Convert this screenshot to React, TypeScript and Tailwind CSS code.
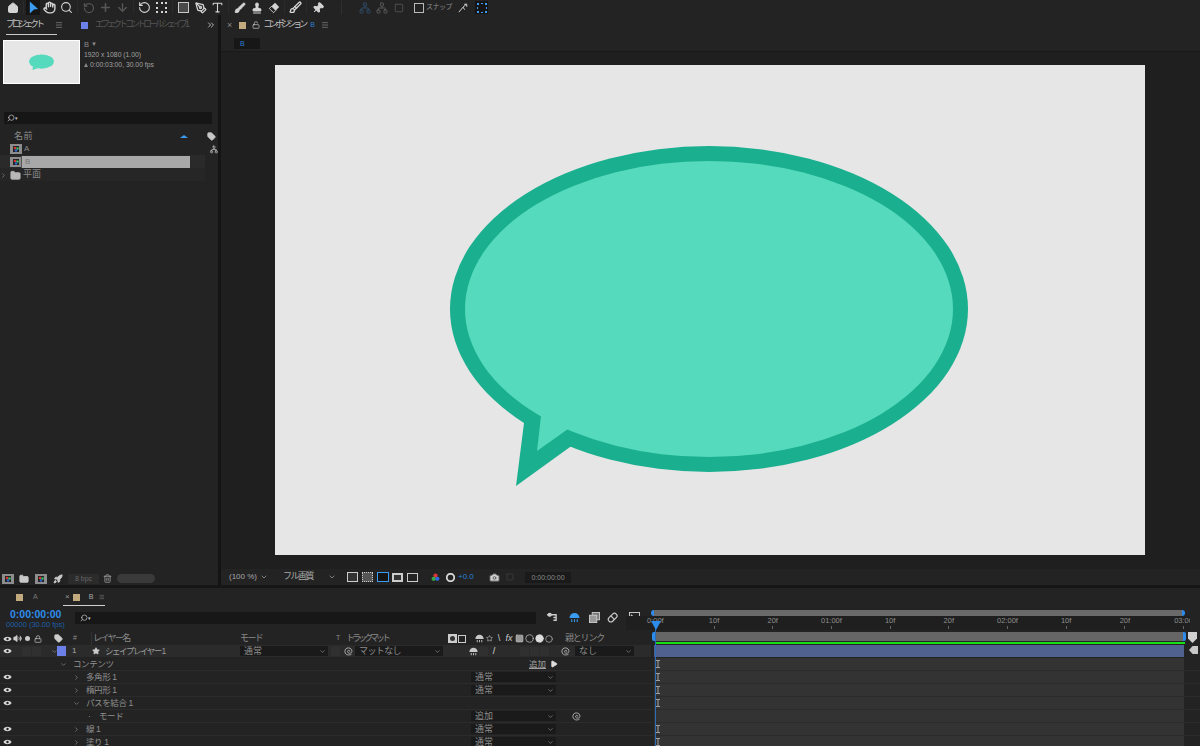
import React from 'react';
import {
  Home, Hand, Search, Plus, ArrowDown, RotateCcw, Square, PenTool, Type, Brush, Stamp, Pin,
  ChevronRight, ChevronDown, ChevronsRight, Tag, Network, Folder, Trash2, Camera, Star, Lock, Volume2, Circle, Menu, Play, Unlock, Rocket,
} from 'lucide-react';

const Arrow = () => (
  <svg viewBox="0 0 12 14" className="w-[11px] h-[14px]"><path d="M2 0 L11 8 L6.5 8.5 L2 13 Z" fill="#3a9bf0" /></svg>
);
const Eye = () => (
  <svg viewBox="0 0 12 8" className="w-[9px] h-[6px] shrink-0"><path d="M0.5 4 C3 0 9 0 11.5 4 C9 8 3 8 0.5 4 Z" fill="#d8d8d8" /><circle cx="6" cy="4" r="1.6" fill="#222" /></svg>
);
const Spiral = ({ c = '#b5b5b5' }: { c?: string }) => (
  <svg viewBox="0 0 12 12" className="w-[9px] h-[9px]" fill="none" stroke={c} strokeWidth="1.2"><path d="M10 9.5 C7 11.5 2 11 1.2 6.5 C0.8 3 3.5 1 6 1.2 C9 1.4 10.8 3.5 10.5 6 C10.2 8 7.8 8.8 6 8 C4.5 7.3 4.3 5.3 5.6 4.6 C6.8 4 8 5 7.6 6.2" /></svg>
);
const Umbrella = ({ c = '#c8c8c8', s = 'w-[9px] h-[9px]' }: { c?: string; s?: string }) => (
  <svg viewBox="0 0 12 12" className={`${s} shrink-0`}><path d="M0.5 6.5 A5.5 5.5 0 0 1 11.5 6.5 Z" fill={c} /><path d="M3 8 V11 M6 8 V11 M9 8 V11" stroke={c} strokeWidth="1.2" /></svg>
);
const Chip = ({ c }: { c: string }) => <div className="w-[7px] h-[7px]" style={{ background: c }} />;
const CompIcon = () => (
  <svg viewBox="0 0 12 10" className="w-[12px] h-[10px] shrink-0"><rect width="12" height="10" fill="#8d8d8d" /><rect x="3" y="2" width="6" height="6" fill="#222" /><circle cx="5" cy="4" r="1.3" fill="#d33" /><circle cx="7.5" cy="4.5" r="1.3" fill="#3b6" /><circle cx="6" cy="6.5" r="1.3" fill="#36c" /></svg>
);
const IBeam = () => (
  <svg viewBox="0 0 5 10" className="w-[4px] h-[10px] ml-[2px]"><path d="M0 0.5H5M0 9.5H5M2.5 0.5V9.5" stroke="#a0a0a0" strokeWidth="1.3" /></svg>
);

const Tb = ({ w = 'w-[17px]', children }: { w?: string; children?: React.ReactNode }) => (
  <div className={`${w} h-[15px] flex items-center justify-center shrink-0`}>{children}</div>
);
const Sep = () => <div className="w-[5px] h-[13px] shrink-0 flex justify-center"><div className="w-px h-full bg-[#2b2b2b]" /></div>;

function Toolbar() {
  const on = 'text-[#d4d4d4]';
  const dim = 'text-[#565656]';
  return (
    <div className="h-[15px] flex items-center bg-[#232323] pl-[4px] shrink-0">
      <Tb><Home size={12} className={on} fill="#d4d4d4" /></Tb>
      <Sep />
      <div className="w-[14px] h-[15px] bg-[#151515] flex items-center justify-center mr-[1px] shrink-0"><Arrow /></div>
      <Tb><Hand size={13} className={on} strokeWidth={2.6} /></Tb>
      <Tb><Search size={13} className={on} /></Tb>
      <Sep />
      <Tb><RotateCcw size={12} className={dim} strokeWidth={2.5} /></Tb>
      <Tb><Plus size={13} className={dim} strokeWidth={3} /></Tb>
      <Tb><ArrowDown size={13} className={dim} strokeWidth={2.5} /></Tb>
      <Sep />
      <Tb><RotateCcw size={13} className={on} /></Tb>
      <Tb><div className="w-[11px] h-[11px] border-2 border-dotted border-[#d4d4d4]" /></Tb>
      <Sep />
      <Tb><div className="w-[11px] h-[11px] border border-[#c8c8c8] bg-[#4a4a4a]" /></Tb>
      <Tb><PenTool size={12} className={on} strokeWidth={2.6} /></Tb>
      <Tb><Type size={13} className={on} /></Tb>
      <Sep />
      <Tb><Brush size={12} className={on} fill="#d4d4d4" /></Tb>
      <Tb><Stamp size={12} className={on} fill="#d4d4d4" /></Tb>
      <Tb>
        <svg viewBox="0 0 12 12" className="w-[12px] h-[12px]"><path d="M7 0.8 L11.2 5 L5.5 10.7 L1.3 6.5 Z" fill="#d4d4d4" /><path d="M1.3 6.5 L3.6 4.2 L7.8 8.4 L5.5 10.7 Z" fill="#232323" stroke="#d4d4d4" strokeWidth="0.8" /></svg>
      </Tb>
      <Sep />
      <Tb><Brush size={13} className={on} strokeWidth={2.4} /></Tb>
      <Sep />
      <Tb><Pin size={12} className={`${on} rotate-45`} fill="#d4d4d4" /></Tb>
      <div className="w-[30px] h-[13px] shrink-0 flex justify-center"><div className="w-px h-full bg-[#2f2f2f]" /></div>
      <Tb><Network size={12} className="text-[#2f4a66]" /></Tb>
      <Tb><Network size={12} className={dim} /></Tb>
      <Tb><Square size={10} className={dim} /></Tb>
      <div className="w-[7px] shrink-0" />
      <div className="w-[10px] h-[10px] border border-[#b8b8b8] mr-[2px] shrink-0" />
      <span className="text-[7px] text-[#8a8a8a] tracking-[-0.5px] w-[27px] shrink-0 whitespace-nowrap">スナップ</span>
      <Tb w="w-[20px]">
        <svg viewBox="0 0 12 12" className="w-[10px] h-[10px]" fill="none" stroke="#d4d4d4" strokeWidth="1.2"><path d="M1 11 L6 5 L8 8 M6 5 L10 1.5 M7.5 1.5 H10.5 V4.5" /></svg>
      </Tb>
      <div className="w-[13px] h-[13px] bg-[#151515] flex items-center justify-center ml-[2px] shrink-0">
        <svg viewBox="0 0 10 10" className="w-[10px] h-[10px]" fill="#3a9bf0"><rect x="0" y="0" width="2" height="2" /><rect x="8" y="0" width="2" height="2" /><rect x="0" y="8" width="2" height="2" /><rect x="8" y="8" width="2" height="2" /><rect x="4" y="0" width="2" height="1" /><rect x="4" y="9" width="2" height="1" /><rect x="0" y="4" width="1" height="2" /><rect x="9" y="4" width="1" height="2" /></svg>
      </div>
    </div>
  );
}

function ProjectPanel() {
  return (
    <div className="w-[218px] shrink-0 flex flex-col bg-[#232323]">
      <div className="h-[20px] flex items-center pl-[6px] shrink-0">
        <div className="relative h-[20px] flex items-center w-[51px] shrink-0">
          <span className="text-[9px] text-[#c0c0c0] tracking-[-3px] whitespace-nowrap">プロジェクト</span>
          <Menu size={8} className="text-[#8a8a8a] ml-[13px] shrink-0" />
          <div className="absolute left-0 right-0 bottom-[0px] h-px bg-[#c8c8c8]" />
        </div>
        <div className="w-[7px] h-[7px] bg-[#6b80e8] ml-[24px] shrink-0" />
        <span className="text-[9px] text-[#555555] tracking-[-3px] ml-[7px] w-[96px] overflow-hidden whitespace-nowrap shrink-0">エフェクトコントロールシェイプ1</span>
        <ChevronsRight size={10} className="text-[#cccccc] ml-[15px]" />
      </div>
      <div className="flex pl-[3px] pt-[5px] h-[77px] shrink-0">
        <div className="w-[77px] h-[44px] bg-[#e6e6e6] border border-white flex items-center justify-center shrink-0">
          <svg viewBox="0 0 30 20" className="w-[29px] h-[19px]"><ellipse cx="15" cy="9" rx="13" ry="7.5" fill="#55dabd" /><path d="M6 14 L5.5 18 L11 16 Z" fill="#55dabd" /></svg>
        </div>
        <div className="ml-[4px] text-[6.8px] leading-[9px] text-[#a0a0a0] whitespace-nowrap">
          <div className="text-[#8a8a8a] flex items-center h-[9px] text-[7.5px]">B <span className="ml-[2px] text-[6px]">▼</span></div>
          <div className="mt-[1px]">1920 x 1080 (1.00)</div>
          <div className="mt-[1px] flex items-center">
            <div className="w-0 h-0 border-l-[2px] border-r-[2px] border-b-[4px] border-l-transparent border-r-transparent border-b-[#888] mr-[2px]" />
            0:00:03:00, 30.00 fps
          </div>
        </div>
      </div>
      <div className="h-[12px] mx-[4px] w-[208px] bg-[#161616] flex items-center pl-[3px] shrink-0">
        <Search size={8} className="text-[#cccccc] -scale-x-100" />
        <span className="text-[5px] text-[#ccc] leading-none">▾</span>
      </div>
      <div className="flex flex-col flex-1 mt-[6px]">
        <div className="h-[13px] flex items-center pl-[14px] shrink-0">
          <span className="text-[9px] text-[#8c8c8c] tracking-[0.5px] w-[166px] shrink-0">名前</span>
          <div className="w-0 h-0 border-l-[4px] border-r-[4px] border-b-[3px] border-l-transparent border-r-transparent border-b-[#3a9bf0]" />
          <Tag size={9} className="text-[#c8c8c8] ml-[19px]" fill="#c8c8c8" />
        </div>
        <div className="h-[12px] flex items-center pl-[10px] shrink-0">
          <CompIcon />
          <span className="text-[8px] text-[#8a8a8a] ml-[2px] w-[184px] shrink-0">A</span>
          <Network size={9} className="text-[#c8c8c8] ml-[2px]" />
        </div>
        <div className="h-[13px] flex items-center pl-[10px] bg-[#2a2a2a] w-[205px] shrink-0">
          <CompIcon />
          <div className="ml-[-1px] w-[169px] h-[12px] bg-[#a8a8a8] flex items-center pl-[3px] border-l border-[#555]">
            <span className="text-[8px] text-[#777]">B</span>
          </div>
        </div>
        <div className="h-[13px] flex items-center bg-[#262626] w-[205px] pt-[1px] shrink-0">
          <ChevronRight size={7} className="text-[#999] ml-[0px] mr-[3px] shrink-0" />
          <Folder size={11} className="text-[#b8b8b8] shrink-0" fill="#b8b8b8" />
          <span className="text-[9px] text-[#8a8a8a] ml-[2px]">平面</span>
        </div>
      </div>
      <div className="h-[13px] flex items-center mb-[0px] shrink-0">
        <div className="w-[15px] flex justify-center shrink-0"><CompIcon /></div>
        <Tb><Folder size={10} className="text-[#c8c8c8]" fill="#c8c8c8" /></Tb>
        <Tb><CompIcon /></Tb>
        <Tb><Rocket size={10} className="text-[#c8c8c8]" fill="#c8c8c8" /></Tb>
        <div className="w-[31px] h-[10px] bg-[#2b2b2b] text-[7px] leading-[10px] text-[#666] text-center ml-[2px] shrink-0">8 bpc</div>
        <Tb><Trash2 size={9} className="text-[#a8a8a8]" /></Tb>
        <div className="w-[38px] h-[9px] bg-[#3a3a3a] rounded-full ml-[1px]" />
      </div>
    </div>
  );
}

const VIcon = ({ children }: { children?: React.ReactNode }) => (
  <div className="w-[15px] h-[13px] flex items-center justify-center shrink-0">{children}</div>
);

function Viewer() {
  return (
    <div className="flex-1 flex flex-col ml-[2px] bg-[#1f1f1f] min-w-0 border-l border-[#141414]">
      <div className="h-[20px] bg-[#232323] flex items-center pl-[6px] shrink-0">
        <span className="text-[9px] text-[#8a8a8a] leading-none">×</span>
        <div className="ml-[7px]"><Chip c="#c2a97e" /></div>
        <Unlock size={8} className="text-[#d0d0d0] ml-[6px]" />
        <span className="text-[9px] text-[#c0c0c0] tracking-[-3px] ml-[3px] whitespace-nowrap">コンポジション</span>
        <span className="text-[7px] text-[#2a7fd0] ml-[5px]">B</span>
        <Menu size={8} className="text-[#888] ml-[6px]" />
      </div>
      <div className="h-[17px] bg-[#232323] border-b border-[#191919] pt-[3px] pl-[13px] shrink-0">
        <div className="w-[26px] h-[11px] bg-[#171717] text-[7px] leading-[11px] pl-[6px] text-[#2a7fd0]">B</div>
      </div>
      <div className="flex-1 pl-[54px] pt-[13px] min-h-0">
        <div className="w-[870px] h-[490px] bg-[#e6e6e6]">
          <svg viewBox="0 0 870 490" className="w-[870px] h-[490px] block">
            <ellipse cx="434" cy="244" rx="259" ry="163" fill="#1aaf8f" />
            <path d="M249 358 L241 421 L295 382 L340 380 L280 320 Z" fill="#1aaf8f" />
            <ellipse cx="434" cy="244" rx="244" ry="148" fill="#55dabd" />
            <path d="M266 351 L262 386 L293 364 L340 375 L300 320 Z" fill="#55dabd" />
          </svg>
        </div>
      </div>
      <div className="h-[16px] bg-[#232323] flex items-center shrink-0 pl-[8px] text-[#a8a8a8]">
        <span className="text-[8px] w-[31px] shrink-0 whitespace-nowrap">(100 %)</span>
        <ChevronDown size={8} className="text-[#aaa] shrink-0" />
        <span className="text-[9px] tracking-[-1.5px] ml-[15px] w-[45px] shrink-0 whitespace-nowrap">フル画質</span>
        <ChevronDown size={8} className="text-[#aaa] shrink-0" />
        <div className="w-[9px] shrink-0" />
        <VIcon><div className="w-[11px] h-[10px] border border-[#ccc] bg-[#333]" /></VIcon>
        <VIcon><div className="w-[11px] h-[10px] border border-dotted border-[#ccc] bg-[#555]" /></VIcon>
        <VIcon><div className="w-[12px] h-[10px] border border-[#3a9bf0] bg-[#151515]" /></VIcon>
        <VIcon><div className="w-[11px] h-[9px] border-2 border-[#ccc] bg-[#333]" /></VIcon>
        <VIcon><div className="w-[11px] h-[9px] border border-[#ccc]" /></VIcon>
        <div className="w-[8px] shrink-0" />
        <VIcon>
          <svg viewBox="0 0 10 10" className="w-[9px] h-[9px]"><circle cx="5" cy="3" r="2.4" fill="#d33" /><circle cx="3" cy="6.5" r="2.4" fill="#3a4" /><circle cx="7" cy="6.5" r="2.4" fill="#36d" /></svg>
        </VIcon>
        <VIcon><Circle size={9} className="text-[#d5d5d5]" strokeWidth={5} /></VIcon>
        <span className="text-[8px] text-[#2a7fd0] w-[29px] shrink-0">+0.0</span>
        <VIcon><Camera size={11} className="text-[#d0d0d0]" fill="#d0d0d0" stroke="#555" /></VIcon>
        <VIcon><Square size={8} className="text-[#444]" /></VIcon>
        <div className="ml-[8px] w-[46px] h-[11px] bg-[#1a1a1a] text-[7px] leading-[11px] text-center text-[#8a8a8a] shrink-0">0:00:00:00</div>
      </div>
    </div>
  );
}

const Dropdown = ({ w, label, tight }: { w: string; label: string; tight?: boolean }) => (
  <div className={`${w} h-[10px] bg-[#1a1a1a] flex items-center justify-between pl-[4px] pr-[2px] shrink-0`}>
    <span className={`text-[9px] text-[#8d8d8d] leading-none whitespace-nowrap ${tight ? 'tracking-[-0.6px]' : ''}`}>{label}</span>
    <ChevronDown size={7} className="text-[#999]" />
  </div>
);
const Box = ({ ml = '' }: { ml?: string }) => <div className={`w-[9px] h-[9px] bg-[#303030] shrink-0 ${ml}`} />;
const Trk = ({ children, bar = false }: { children?: React.ReactNode; bar?: boolean }) => (
  <div className="flex-1 h-full flex items-center bg-[#232323] pl-[3px]">
    <div className={`w-[530px] h-full flex items-center ${bar ? 'bg-[#50608f]' : 'bg-[#333333]'}`}>{children}</div>
  </div>
);

function SubRow({ eye, indent, open, label, mode, spiral, add, beam = true, tail }: {
  eye?: boolean; indent: string; open?: 'r' | 'd'; label: string; mode?: string; spiral?: boolean; add?: boolean; beam?: boolean; tail?: boolean;
}) {
  return (
    <div className="h-[13px] flex items-center border-b border-[#2b2b2b] shrink-0">
      <div className="w-[651px] flex items-center shrink-0 h-full">
        <div className="w-[13px] pl-[2px] flex justify-center shrink-0">{eye && <Eye />}</div>
        <div className={`${indent} flex items-center w-[458px] shrink-0`}>
          <div className="w-[9px] shrink-0 flex justify-center">
            {open === 'r' && <ChevronRight size={7} className="text-[#999]" />}
            {open === 'd' && <ChevronDown size={7} className="text-[#999]" />}
            {tail && <div className="w-px h-px bg-[#777]" />}
          </div>
          <span className="text-[8.5px] tracking-[-0.4px] text-[#909090] ml-[5px] whitespace-nowrap">{label}</span>
        </div>
        {mode && <Dropdown w="w-[85px]" label={mode} />}
        {spiral && <div className="ml-[16px]"><Spiral /></div>}
        {add && (
          <div className="flex items-center ml-[58px]">
            <span className="text-[8.5px] text-[#a0a0a0] underline">追加</span>
            <Play size={8} className="ml-[4px] text-[#ddd]" fill="#ddd" />
          </div>
        )}
      </div>
      <Trk>{beam && <IBeam />}</Trk>
    </div>
  );
}

function Ruler() {
  const labels = ['0:00f', '10f', '20f', '01:00f', '10f', '20f', '02:00f', '10f', '20f', '03:00'];
  return (
    <div className="h-[14px] flex items-start overflow-hidden bg-[#1f1f1f] ml-[-25px] shrink-0 w-[564px]">
      {labels.map((l, i) => (
        <div key={i} className="w-[58.7px] shrink-0 flex flex-col items-center">
          <span className="text-[7.5px] leading-[9px] text-[#8f8f8f]">{l}</span>
          <div className="w-px h-[3px] mt-[1px] bg-[#666]" />
        </div>
      ))}
    </div>
  );
}

const HCell = ({ children }: { children?: React.ReactNode }) => (
  <div className="w-[10px] flex items-center justify-center shrink-0">{children}</div>
);

function Timeline() {
  return (
    <div className="h-[159px] mt-[2px] bg-[#232323] flex flex-col relative overflow-hidden border-t border-[#151515]">
      <div className="h-[18px] flex items-center shrink-0">
        <div className="ml-[16px]"><Chip c="#c2a97e" /></div>
        <span className="text-[7px] text-[#777] ml-[10px] w-[5px]">A</span>
        <div className="ml-[25px] relative flex items-center h-[18px] w-[42px] pl-[2px]">
          <span className="text-[8px] text-[#999] leading-none">×</span>
          <div className="ml-[3px]"><Chip c="#c2a97e" /></div>
          <span className="text-[7px] text-[#aaa] ml-[9px]">B</span>
          <Menu size={8} className="text-[#888] ml-[6px]" />
          <div className="absolute left-0 right-0 bottom-0 h-px bg-[#cfcfcf]" />
        </div>
      </div>
      <div className="h-[26px] flex shrink-0">
        <div className="w-[651px] flex shrink-0">
          <div className="w-[75px] pt-[2px] pl-[10px] shrink-0">
            <div className="text-[10.5px] leading-[13px] font-bold text-[#2d8ceb] whitespace-nowrap">0:00:00:00</div>
            <div className="text-[7.5px] leading-[8px] text-[#1f5fa5] ml-[-4px] whitespace-nowrap">00000 (30.00 fps)</div>
          </div>
          <div className="w-[461px] h-[12px] mt-[6px] bg-[#171717] flex items-center pl-[5px] shrink-0">
            <Search size={8} className="text-[#ccc] -scale-x-100" />
            <span className="text-[5px] text-[#ccc] leading-none">▾</span>
          </div>
          <div className="flex items-start pt-[6px] pl-[5px]">
            <div className="w-[22px] flex justify-center">
              <svg viewBox="0 0 12 12" className="w-[11px] h-[11px]" fill="none" stroke="#ccc" strokeWidth="1.4"><path d="M0 3 H5 M5 3 H10 V9 H7 M7 6 H10" /><circle cx="3" cy="3" r="1.6" fill="#ccc" /></svg>
            </div>
            <div className="w-[22px] flex justify-center"><Umbrella c="#3a9bf0" s="w-[11px] h-[11px]" /></div>
            <div className="w-[18px] flex justify-center">
              <svg viewBox="0 0 12 12" className="w-[11px] h-[11px]"><rect x="3.5" y="0.5" width="8" height="8" fill="#777" stroke="#ccc" /><rect x="0.5" y="3.5" width="8" height="8" fill="#999" stroke="#ccc" /></svg>
            </div>
            <div className="w-[18px] flex justify-center">
              <svg viewBox="0 0 12 12" className="w-[11px] h-[11px]" fill="none" stroke="#ccc" strokeWidth="1.3"><rect x="0.5" y="3.5" width="11" height="5.5" rx="2.7" transform="rotate(-45 6 6)" /><path d="M4 4 L8 8" /></svg>
            </div>
            <div className="w-[26px] flex justify-center">
              <svg viewBox="0 0 12 12" className="w-[11px] h-[11px]" fill="none" stroke="#ccc" strokeWidth="1.1"><rect x="0.5" y="0.5" width="11" height="11" /><path d="M2 3 L10 10" /></svg>
            </div>
          </div>
        </div>
        <div className="flex-1 flex flex-col min-w-0 pt-[4px]">
          <div className="h-[6px] w-[534px] bg-[#6a6a6a] rounded-full border-x-[3px] border-[#2d8ceb] shrink-0" />
          <Ruler />
        </div>
      </div>
      <div className="h-[13px] flex items-center shrink-0">
        <div className="w-[651px] flex items-center shrink-0 text-[#8a8a8a]">
          <div className="pl-[3px] flex items-center gap-[1px] w-[55px] shrink-0">
            <Eye /><Volume2 size={9} className="text-[#ccc] shrink-0" fill="#ccc" /><div className="w-[5px] h-[5px] rounded-full bg-[#ccc] ml-[2px] shrink-0" /><Lock size={8} className="text-[#ccc] ml-[3px] shrink-0" />
          </div>
          <Tag size={9} className="text-[#ccc] ml-[-1px] shrink-0" fill="#ccc" />
          <span className="text-[7px] ml-[10px] w-[18px] shrink-0">#</span>
          <span className="text-[9px] tracking-[-1.6px] w-[149px] shrink-0 whitespace-nowrap border-l border-[#333] pl-[1px]">レイヤー名</span>
          <span className="text-[9px] tracking-[-1.6px] w-[96px] shrink-0 whitespace-nowrap">モード</span>
          <span className="text-[7px] w-[10px] shrink-0">T</span>
          <span className="text-[9px] tracking-[-3px] w-[101px] shrink-0 whitespace-nowrap">トラックマット</span>
          <div className="w-[118px] flex items-center shrink-0">
            <HCell><div className="w-[9px] h-[9px] bg-[#ccc] flex items-center justify-center"><div className="w-[5px] h-[5px] rounded-full bg-[#333]" /></div></HCell>
            <HCell><div className="w-[8px] h-[8px] border border-[#ccc]" /></HCell>
            <div className="w-[7px] shrink-0" />
            <HCell><Umbrella /></HCell>
            <HCell><Star size={7} className="text-[#ccc]" /></HCell>
            <HCell><span className="text-[9px] leading-none text-[#ccc]">\</span></HCell>
            <HCell><span className="text-[9px] leading-none text-[#ccc] italic">fx</span></HCell>
            <HCell><Square size={9} className="text-[#bbb]" fill="#999" /></HCell>
            <HCell><Circle size={9} className="text-[#bbb]" /></HCell>
            <HCell><Circle size={9} className="text-[#ddd]" fill="#ddd" /></HCell>
            <HCell><Circle size={8} className="text-[#bbb]" /></HCell>
          </div>
          <span className="text-[9px] tracking-[-1.2px] whitespace-nowrap">親とリンク</span>
        </div>
        <div className="flex-1 pl-[1px] h-full">
          <div className="h-[9px] w-[534px] bg-[#666666] border-x-[3px] border-[#2d8ceb] rounded-[2px]" />
          <div className="h-[2px] w-[530px] ml-[3px] mt-[1px] bg-[#18e018]" />
        </div>
      </div>
      <div className="h-[13px] flex items-center bg-[#2b2b2b] border-b border-[#222] shrink-0">
        <div className="w-[651px] flex items-center shrink-0 h-full">
          <div className="w-[13px] pl-[2px] flex justify-center shrink-0"><Eye /></div>
          <Box ml="ml-[9px]" />
          <Box ml="ml-[1px]" />
          <ChevronDown size={7} className="text-[#999] ml-[10px] shrink-0" />
          <div className="w-[9px] h-[10px] bg-[#6b80e8] ml-[-1px] shrink-0" />
          <span className="text-[8px] text-[#aaa] ml-[6px] w-[20px] shrink-0">1</span>
          <Star size={8} className="text-[#ccc] shrink-0" fill="#ccc" />
          <span className="text-[8.5px] tracking-[-1.5px] text-[#999] ml-[5px] w-[135px] shrink-0 whitespace-nowrap">シェイプレイヤー 1</span>
          <Dropdown w="w-[88px]" label="通常" />
          <Box ml="ml-[3px]" />
          <div className="ml-[4px] shrink-0"><Spiral /></div>
          <div className="ml-[2px]"><Dropdown w="w-[88px]" label="マットなし" tight /></div>
          <Umbrella s="w-[9px] h-[9px] ml-[26px]" />
          <Box ml="ml-[1px]" />
          <span className="text-[9px] leading-none text-[#ddd] ml-[1px] w-[10px] text-center shrink-0">/</span>
          <Box ml="ml-[21px]" />
          <Box ml="ml-[1px]" />
          <Box ml="ml-[1px]" />
          <div className="ml-[12px] shrink-0"><Spiral /></div>
          <div className="ml-[5px]"><Dropdown w="w-[59px]" label="なし" /></div>
        </div>
        <Trk bar />
      </div>
      <SubRow indent="pl-[46px]" open="d" label="コンテンツ" add />
      <SubRow eye indent="pl-[59px]" open="r" label="多角形 1" mode="通常" />
      <SubRow eye indent="pl-[59px]" open="r" label="楕円形 1" mode="通常" />
      <SubRow eye indent="pl-[59px]" open="d" label="パスを結合 1" />
      <SubRow indent="pl-[72px]" tail label="モード" mode="追加" spiral beam={false} />
      <SubRow eye indent="pl-[59px]" open="r" label="線 1" mode="通常" />
      <SubRow eye indent="pl-[59px]" open="r" label="塗り 1" mode="通常" />
      {/* playhead over the tracks */}
      <div className="absolute left-[655px] top-[33px] bottom-0 w-px bg-[#2a6cb5]" />
      <div className="absolute left-[651px] top-[33px] w-0 h-0 border-l-[5px] border-r-[5px] border-t-[9px] border-l-transparent border-r-transparent border-t-[#2d8ceb]" />
      <div className="absolute left-[1188px] top-[44px] w-[9px] h-[11px] bg-[#d0d0d0] [clip-path:polygon(0_0,100%_0,100%_60%,50%_100%,0_60%)]" />
      <div className="absolute left-[1189px] top-[58px] w-[9px] h-[8px] bg-[#c8c8c8] [clip-path:polygon(0_50%,40%_0,100%_0,100%_100%,40%_100%)]" />
    </div>
  );
}

export default function App() {
  return (
    <div className="w-[1200px] h-[746px] bg-[#161616] flex flex-col overflow-hidden font-['Liberation_Sans','Noto_Sans_CJK_JP',sans-serif]">
      <Toolbar />
      <div className="h-[570px] flex shrink-0 bg-[#141414]">
        <ProjectPanel />
        <Viewer />
      </div>
      <Timeline />
    </div>
  );
}
